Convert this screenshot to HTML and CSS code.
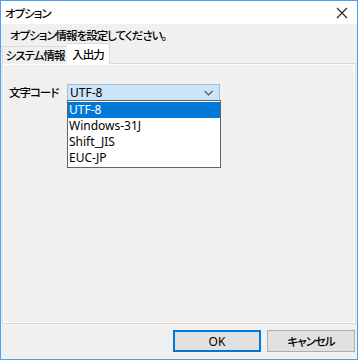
FILE: index.html
```html
<!DOCTYPE html>
<html lang="ja">
<head>
<meta charset="utf-8">
<link rel="stylesheet" href="styles.css">
</head>
<body>
<div class="window">
  <div class="titlebar">
    <span class="title ja">オプション</span>
    <svg class="close" width="12" height="12" viewBox="0 0 12 12"><path d="M1 1 L11 11 M11 1 L1 11" stroke="#222" stroke-width="1.1" fill="none"/></svg>
  </div>
  <div class="client">
    <div class="desc ja">オプション情報を設定してください。</div>
    <div class="tabs">
      <div class="tab ja">システム情報</div>
      <div class="tab active ja">入出力</div>
    </div>
    <div class="panel">
      <div class="row">
        <span class="label ja">文字コード</span>
        <div class="combo-wrap">
          <div class="combo">
            <span>UTF-8</span>
            <svg class="chev" width="9" height="6" viewBox="0 0 9 6"><path d="M0.5 1 L4.5 5 L8.5 1" stroke="#555" stroke-width="1.1" fill="none"/></svg>
          </div>
          <ul class="list">
            <li class="sel">UTF-8</li>
            <li>Windows-31J</li>
            <li>Shift_JIS</li>
            <li>EUC-JP</li>
          </ul>
        </div>
      </div>
    </div>
    <div class="footer">
      <button class="btn default">OK</button>
      <button class="btn ja">キャンセル</button>
    </div>
  </div>
</div>
</body>
</html>
```
FILE: styles.css
```css
html, body {
  margin: 0;
  padding: 0;
  background: #fff;
}
body {
  font-family: "Noto Sans", "Noto Sans CJK JP", sans-serif;
  font-size: 12px;
  color: #000;
  white-space: nowrap;
}
.ja {
  font-family: "Noto Sans CJK JP", sans-serif;
  font-size: 11.5px;
  font-weight: 500;
  letter-spacing: -1px;
  font-feature-settings: "palt";
}
.window {
  width: 358px;
  height: 360px;
  box-sizing: border-box;
  border: 1px solid #4d9ff0;
  display: flex;
  flex-direction: column;
}
.titlebar {
  height: 23px;
  background: #fff;
  display: flex;
  align-items: center;
  justify-content: space-between;
  padding: 0 9px 0 4px;
}
.title {
  line-height: 16px;
}
.close {
  display: block;
}
.client {
  flex: 1;
  background: #f0f0f0;
  display: flex;
  flex-direction: column;
}
.desc {
  padding: 3px 0 0 9px;
  line-height: 16px;
  height: 16px;
}
.tabs {
  display: flex;
  align-items: flex-end;
  height: 20px;
  padding-left: 1px;
  position: relative;
  z-index: 1;
}
.tab {
  height: 18px;
  line-height: 17px;
  border: 1px solid #d9d9d9;
  border-bottom: none;
  background: #f0f0f0;
  box-sizing: border-box;
  margin-bottom: -1px;
  text-align: center;
  width: 66px;
}
.tab.active {
  width: 43px;
  height: 21px;
  line-height: 20px;
  background: #fff;
  border-left: none;
  margin-left: -1px;
}
.panel {
  height: 261px;
  margin: 0 1px;
  border: 1px solid #d9d9d9;
  box-shadow: inset 1px 1px 0 #fff, inset -1px -1px 0 #fff;
  background: #f0f0f0;
  padding: 20px 0 0 6px;
  box-sizing: border-box;
}
.row {
  display: flex;
  align-items: flex-start;
}
.label {
  width: 58px;
  line-height: 17px;
}
.combo-wrap {
  position: relative;
  width: 153px;
}
.combo {
  height: 17px;
  box-sizing: border-box;
  border: 1px solid #a9bccf;
  background: #cce4f7;
  display: flex;
  align-items: center;
  justify-content: space-between;
  padding: 0 6px 0 2px;
  line-height: 15px;
}
.chev {
  display: block;
}
.list {
  position: absolute;
  left: 0;
  top: 16px;
  width: 154px;
  margin: 0;
  padding: 1px 0;
  list-style: none;
  border: 1px solid #646464;
  background: #fff;
  box-sizing: border-box;
}
.list li {
  height: 16px;
  line-height: 16px;
  padding-left: 1px;
}
.list li.sel {
  background: #0078d7;
  color: #fff;
}
.footer {
  flex: 1;
  display: flex;
  justify-content: flex-end;
  align-items: flex-start;
  gap: 6px;
  padding: 6px 2px 0 0;
}
.btn {
  width: 88px;
  height: 22px;
  margin: 0;
  padding: 0;
  border: 1px solid #adadad;
  background: #e1e1e1;
  font-family: "Noto Sans", "Noto Sans CJK JP", sans-serif;
  font-size: 12px;
  color: #000;
}
.btn.ja {
  font-family: "Noto Sans CJK JP", sans-serif;
  font-size: 11.5px;
}
.btn.default {
  border: 2px solid #0078d7;
}
```
